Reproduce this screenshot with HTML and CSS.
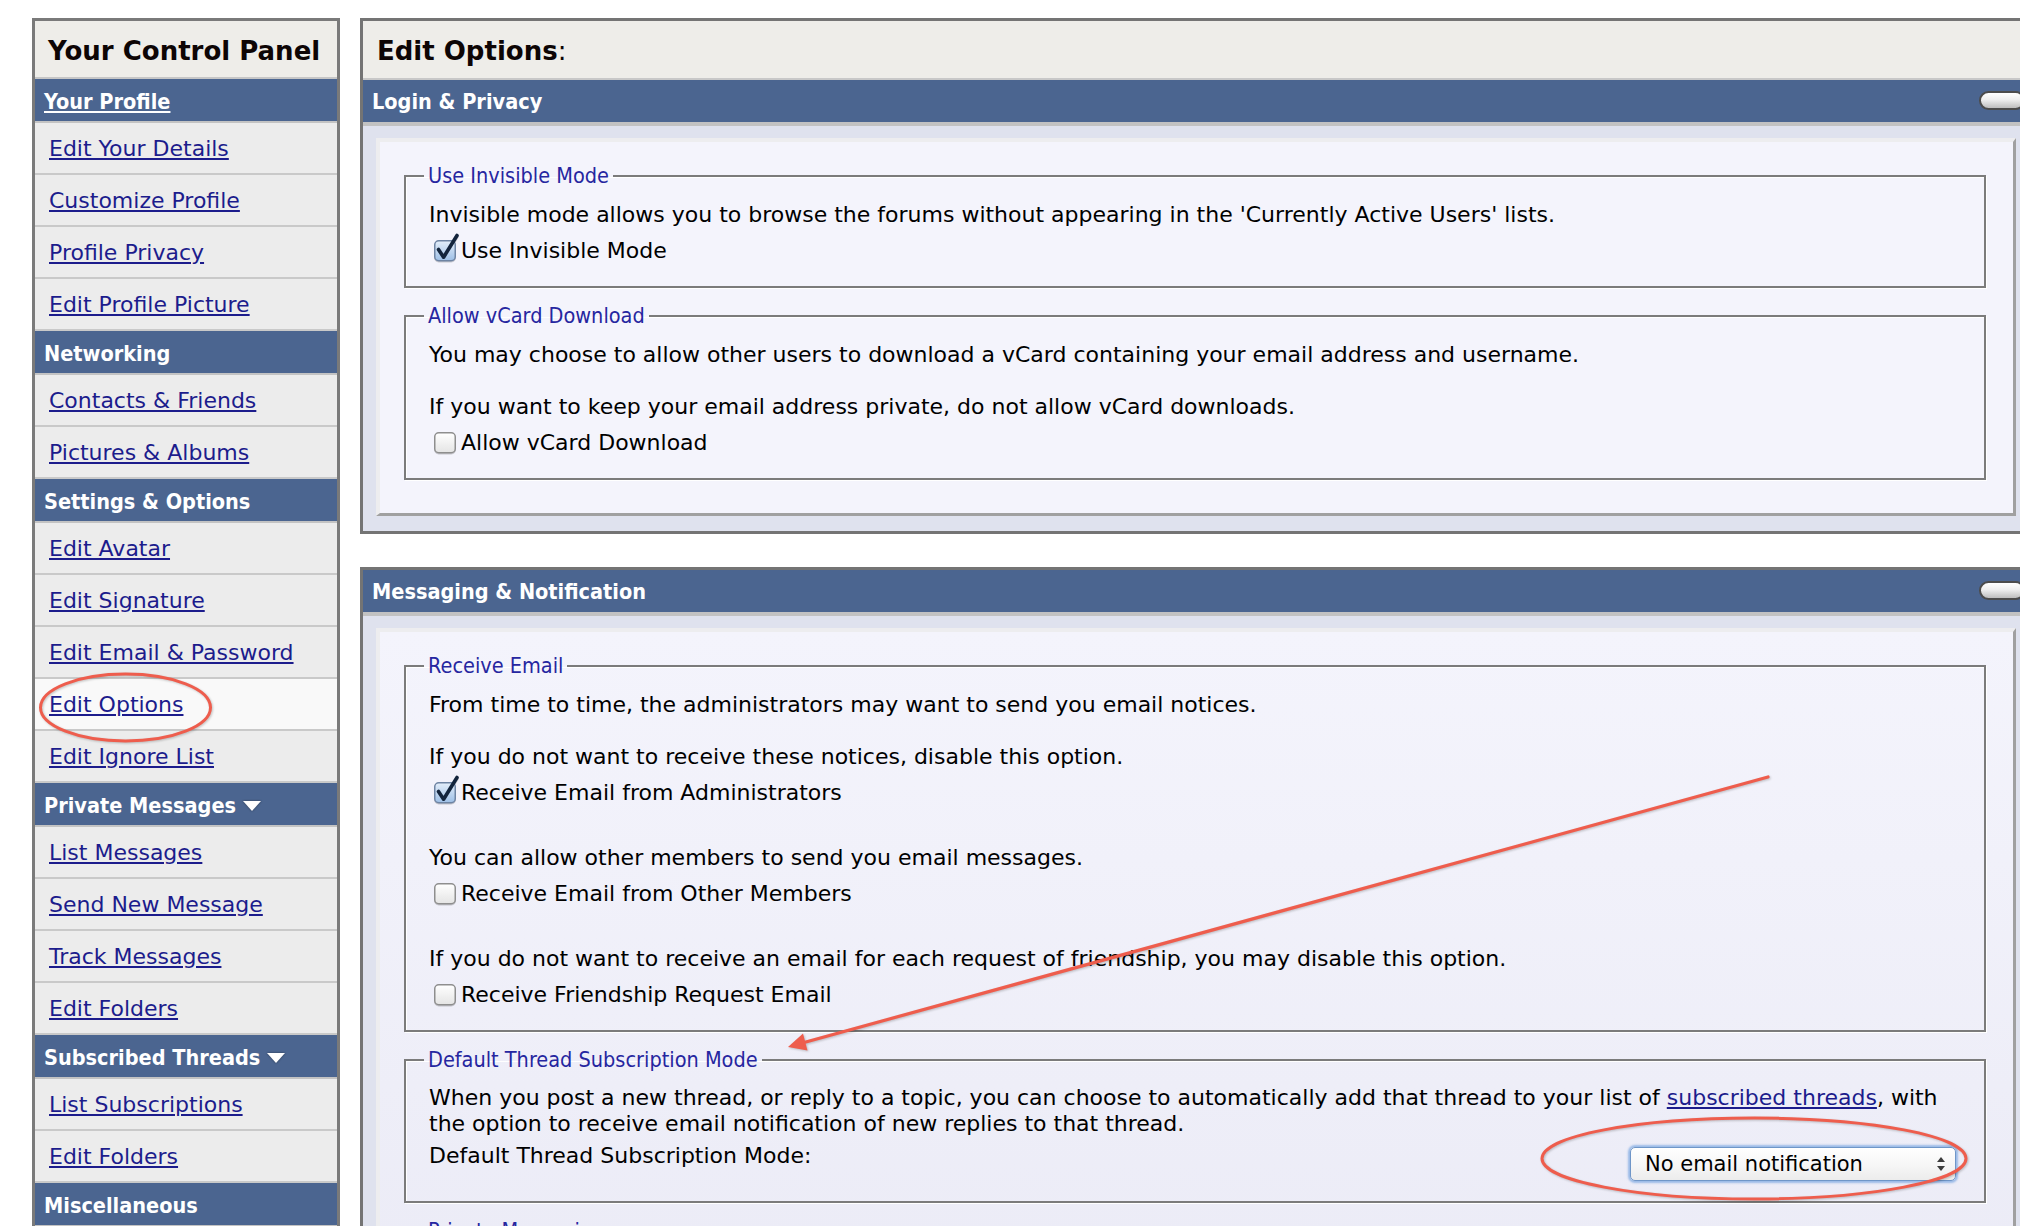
FILE: index.html
```html
<!DOCTYPE html>
<html lang="en">
<head>
<meta charset="utf-8">
<title>Edit Options</title>
<link rel="stylesheet" href="styles.css">
</head>
<body>
<div class="page">
  <nav class="sidebar">
    <div class="side-title">Your Control Panel</div>
    <div class="side-head"><a class="head-link" href="#">Your Profile</a></div>
    <div class="item"><a href="#">Edit Your Details</a></div>
    <div class="item"><a href="#">Customize Profile</a></div>
    <div class="item"><a href="#">Profile Privacy</a></div>
    <div class="item"><a href="#">Edit Profile Picture</a></div>
    <div class="side-head">Networking</div>
    <div class="item"><a href="#">Contacts &amp; Friends</a></div>
    <div class="item"><a href="#">Pictures &amp; Albums</a></div>
    <div class="side-head">Settings &amp; Options</div>
    <div class="item"><a href="#">Edit Avatar</a></div>
    <div class="item"><a href="#">Edit Signature</a></div>
    <div class="item"><a href="#">Edit Email &amp; Password</a></div>
    <div class="item active"><a href="#">Edit Options</a></div>
    <div class="item"><a href="#">Edit Ignore List</a></div>
    <div class="side-head">Private Messages <svg class="tri" width="20" height="12" viewBox="0 0 20 12"><polygon points="1,1 19,1 10,11" fill="#fff"/></svg></div>
    <div class="item"><a href="#">List Messages</a></div>
    <div class="item"><a href="#">Send New Message</a></div>
    <div class="item"><a href="#">Track Messages</a></div>
    <div class="item"><a href="#">Edit Folders</a></div>
    <div class="side-head">Subscribed Threads <svg class="tri" width="20" height="12" viewBox="0 0 20 12"><polygon points="1,1 19,1 10,11" fill="#fff"/></svg></div>
    <div class="item"><a href="#">List Subscriptions</a></div>
    <div class="item"><a href="#">Edit Folders</a></div>
    <div class="side-head">Miscellaneous</div>
  </nav>

  <main class="main">
    <section class="panel">
      <div class="panel-title"><b>Edit Options</b>:</div>
      <div class="panel-head"><span>Login &amp; Privacy</span><span class="pill"></span></div>
      <div class="panel-body">
        <div class="inner">
          <fieldset class="fs">
            <legend>Use Invisible Mode</legend>
            <div class="opt">
              <p class="desc">Invisible mode allows you to browse the forums without appearing in the 'Currently Active Users' lists.</p>
              <label class="check"><svg class="cb" width="22" height="22" viewBox="0 0 22 22"><defs><linearGradient id="gOn" x1="0" y1="0" x2="0" y2="1"><stop offset="0" stop-color="#e4eefa"/><stop offset="1" stop-color="#9dbfe6"/></linearGradient></defs><rect x="0.75" y="0.75" width="20.5" height="20" rx="4" fill="url(#gOn)" stroke="#6e84a3" stroke-width="1.5"/><path d="M4.5 9.5 L9.6 17.2 L23 -4.5" fill="none" stroke="#13243c" stroke-width="3.6" stroke-linecap="round" stroke-linejoin="round"/></svg>Use Invisible Mode</label>
            </div>
          </fieldset>
          <fieldset class="fs">
            <legend>Allow vCard Download</legend>
            <div class="opt">
              <p class="desc">You may choose to allow other users to download a vCard containing your email address and username.</p>
              <p class="desc">If you want to keep your email address private, do not allow vCard downloads.</p>
              <label class="check"><svg class="cb" width="22" height="22" viewBox="0 0 22 22"><defs><linearGradient id="gOff1" x1="0" y1="0" x2="0" y2="1"><stop offset="0" stop-color="#ffffff"/><stop offset="1" stop-color="#e4e4e4"/></linearGradient></defs><rect x="0.75" y="0.75" width="20.5" height="20" rx="4" fill="url(#gOff1)" stroke="#8e8e8e" stroke-width="1.5"/></svg>Allow vCard Download</label>
            </div>
          </fieldset>
        </div>
      </div>
    </section>

    <section class="panel">
      <div class="panel-head"><span>Messaging &amp; Notification</span><span class="pill"></span></div>
      <div class="panel-body">
        <div class="inner inner-grad">
          <fieldset class="fs">
            <legend>Receive Email</legend>
            <div class="opt">
              <p class="desc">From time to time, the administrators may want to send you email notices.</p>
              <p class="desc">If you do not want to receive these notices, disable this option.</p>
              <label class="check"><svg class="cb" width="22" height="22" viewBox="0 0 22 22"><defs><linearGradient id="gOn2" x1="0" y1="0" x2="0" y2="1"><stop offset="0" stop-color="#e4eefa"/><stop offset="1" stop-color="#9dbfe6"/></linearGradient></defs><rect x="0.75" y="0.75" width="20.5" height="20" rx="4" fill="url(#gOn2)" stroke="#6e84a3" stroke-width="1.5"/><path d="M4.5 9.5 L9.6 17.2 L23 -4.5" fill="none" stroke="#13243c" stroke-width="3.6" stroke-linecap="round" stroke-linejoin="round"/></svg>Receive Email from Administrators</label>
            </div>
            <div class="opt">
              <p class="desc">You can allow other members to send you email messages.</p>
              <label class="check"><svg class="cb" width="22" height="22" viewBox="0 0 22 22"><defs><linearGradient id="gOff2" x1="0" y1="0" x2="0" y2="1"><stop offset="0" stop-color="#ffffff"/><stop offset="1" stop-color="#e4e4e4"/></linearGradient></defs><rect x="0.75" y="0.75" width="20.5" height="20" rx="4" fill="url(#gOff2)" stroke="#8e8e8e" stroke-width="1.5"/></svg>Receive Email from Other Members</label>
            </div>
            <div class="opt">
              <p class="desc">If you do not want to receive an email for each request of friendship, you may disable this option.</p>
              <label class="check"><svg class="cb" width="22" height="22" viewBox="0 0 22 22"><defs><linearGradient id="gOff3" x1="0" y1="0" x2="0" y2="1"><stop offset="0" stop-color="#ffffff"/><stop offset="1" stop-color="#e4e4e4"/></linearGradient></defs><rect x="0.75" y="0.75" width="20.5" height="20" rx="4" fill="url(#gOff3)" stroke="#8e8e8e" stroke-width="1.5"/></svg>Receive Friendship Request Email</label>
            </div>
          </fieldset>
          <fieldset class="fs fs-tight">
            <legend>Default Thread Subscription Mode</legend>
            <div class="opt">
              <p class="desc nowrap">When you post a new thread, or reply to a topic, you can choose to automatically add that thread to your list of <a href="#">subscribed threads</a>, with<br>the option to receive email notification of new replies to that thread.</p>
              <div class="select-row">
                <span>Default Thread Subscription Mode:</span>
                <div class="select"><span>No email notification</span><svg width="10" height="16" viewBox="0 0 10 16"><polygon points="5,1 9,6 1,6" fill="#3c3c3c"/><polygon points="1,10 9,10 5,15" fill="#3c3c3c"/></svg></div>
              </div>
            </div>
          </fieldset>
          <fieldset class="fs">
            <legend>Private Messaging</legend>
          </fieldset>
        </div>
      </div>
    </section>
  </main>
</div>

<svg class="marks" width="2020" height="1226" viewBox="0 0 2020 1226">
  <ellipse cx="125.5" cy="707.5" rx="85" ry="33.5" fill="none" stroke="#ee5d4d" stroke-width="3"/>
  <ellipse cx="1754" cy="1158.5" rx="212" ry="40.5" fill="none" stroke="#ee5d4d" stroke-width="3"/>
  <line x1="1768" y1="777" x2="804" y2="1042.5" stroke="#ee5d4d" stroke-width="3.2" stroke-linecap="round"/>
  <polygon points="788,1047 807.5,1050.5 803,1033.5" fill="#ee5d4d"/>
</svg>
</body>
</html>
```

FILE: styles.css
```css
html, body {
  margin: 0;
  padding: 0;
  background: #ffffff;
  overflow: hidden;
  width: 2020px;
  height: 1226px;
}

body {
  position: relative;
  font-family: "DejaVu Sans", Verdana, sans-serif;
  font-size: 22px;
  color: #000;
}

a {
  color: #1c1c8c;
  text-decoration: underline;
}

.page {
  display: flex;
  align-items: flex-start;
  gap: 20px;
  padding: 18px 0 0 32px;
}

/* ---------- sidebar ---------- */
.sidebar {
  flex: none;
  width: 308px;
  box-sizing: border-box;
  border: 3px solid #7a7a7a;
  background: #ececec;
}

.side-title {
  height: 58px;
  box-sizing: border-box;
  border-bottom: 2px solid #c6c6c6;
  background: #eeede9;
  display: flex;
  align-items: center;
  padding: 3px 0 0 13px;
  font-weight: bold;
  font-size: 26px;
  color: #0d0505;
}

.side-head {
  box-sizing: border-box;
  height: 44px;
  border-bottom: 2px solid #c3c3c3;
  background: #4b6590;
  display: flex;
  align-items: center;
  gap: 6px;
  padding: 2px 0 0 9px;
  color: #fff;
  font-family: "DejaVu Sans Condensed", "DejaVu Sans", sans-serif;
  font-stretch: condensed;
  font-weight: bold;
  font-size: 21.5px;
}

.head-link {
  color: #fff;
}

.tri {
  margin-top: 2px;
  filter: drop-shadow(0 0 1px rgba(0, 0, 0, 0.45));
}

.item {
  height: 50px;
  border-bottom: 2px solid #c9c9c9;
  display: flex;
  align-items: center;
  padding-left: 14px;
  background: #ececec;
}

.item.active {
  background: #f9f9f9;
}

/* ---------- main ---------- */
.main {
  flex: none;
  width: 1672px;
  display: flex;
  flex-direction: column;
  gap: 33px;
}

.panel {
  border: 3px solid #747474;
}

.panel-title {
  height: 59px;
  box-sizing: border-box;
  border-bottom: 2px solid #c8c8c8;
  background: #eeede9;
  display: flex;
  align-items: center;
  padding: 3px 0 0 14px;
  font-size: 26px;
  color: #0d0505;
}

.panel-title b {
  font-weight: bold;
}

.panel-head {
  height: 42px;
  border-bottom: 4px solid #c2c2c2;
  background: #4b6590;
  display: flex;
  align-items: center;
  justify-content: space-between;
  padding: 0 4px 0 9px;
  color: #fff;
  font-family: "DejaVu Sans Condensed", "DejaVu Sans", sans-serif;
  font-stretch: condensed;
  font-weight: bold;
  font-size: 21.5px;
}

.pill {
  width: 42px;
  height: 15px;
  border: 2px solid #4c4c4c;
  border-radius: 10px;
  background: linear-gradient(#ffffff, #eeeeee 45%, #bdbdbd);
  margin-top: -2px;
}

.panel-body {
  background: #dfe2ee;
  padding: 12px 13px 15px;
}

.inner {
  border-style: solid;
  border-width: 4px 3px 3px 4px;
  border-color: #ededef #a0a0a0 #a0a0a0 #ededef;
  background: #f4f4fc;
  padding: 21px 27px 33px 24px;
}

.inner-grad {
  background: linear-gradient(#f4f4fc, #ebebf6);
}

/* ---------- fieldsets ---------- */
.fs {
  margin: 0 0 15px;
  padding: 13px 18px 22px;
  border: 2px solid #7b7b7b;
  box-shadow: 1px 1px 0 #ffffff, inset 1px 1px 0 #ffffff;
  min-width: 0;
}

.fs:last-child {
  margin-bottom: 0;
}

.fs legend {
  padding: 0 4px;
  font-family: "DejaVu Sans Condensed", "DejaVu Sans", sans-serif;
  font-stretch: condensed;
  font-size: 21.5px;
  line-height: 26px;
  color: #2626a0;
}

.fs-tight {
  padding-top: 12px;
  padding-bottom: 20px;
}

.opt {
  display: flex;
  flex-direction: column;
  padding: 0 5px;
}

.opt + .opt {
  margin-top: 39px;
}

.desc {
  margin: 0;
  line-height: 26px;
}

.desc + .desc {
  margin-top: 26px;
}

.nowrap {
  white-space: nowrap;
}

.check {
  margin-top: 10px;
  height: 26px;
  display: flex;
  align-items: center;
  line-height: 26px;
}

.cb {
  flex: none;
  overflow: visible;
  margin: 0 5px 0 5px;
  filter: drop-shadow(0 1px 0.5px rgba(0, 0, 0, 0.18));
}

.select-row {
  margin-top: 6px;
  display: flex;
  justify-content: space-between;
  align-items: flex-start;
  line-height: 26px;
}

.select {
  margin-top: 4px;
  margin-right: 5px;
  width: 326px;
  height: 34px;
  box-sizing: border-box;
  border: 1px solid #6f96c8;
  border-radius: 5px;
  box-shadow: 0 0 2px 2px rgba(110, 160, 222, 0.65);
  background: linear-gradient(#ffffff, #f7f7f7 50%, #ececec);
  display: flex;
  align-items: center;
  justify-content: space-between;
  padding: 0 9px 0 14px;
  font-family: "DejaVu Sans", sans-serif;
  font-size: 21px;
  color: #000;
}

/* ---------- annotation overlay ---------- */
.marks {
  position: absolute;
  top: 0;
  left: 0;
  pointer-events: none;
  filter: drop-shadow(1px 1px 1px rgba(0, 0, 0, 0.22));
}
```
